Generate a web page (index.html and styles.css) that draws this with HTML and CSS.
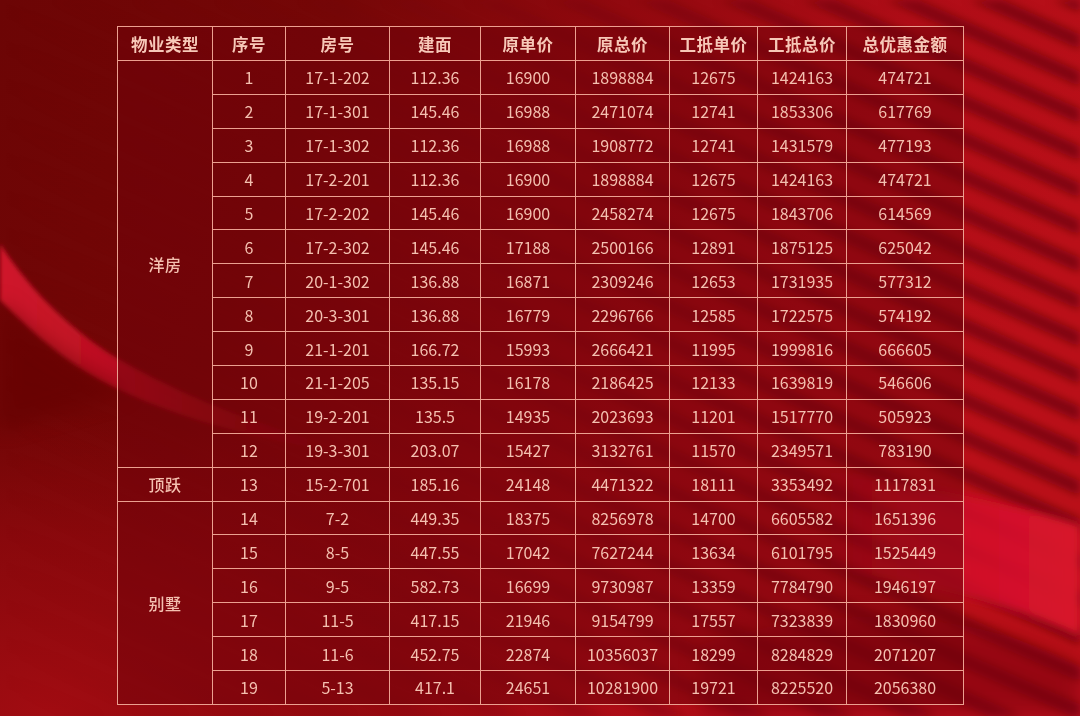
FILE: index.html
```html
<!DOCTYPE html>
<html lang="zh-CN">
<head>
<meta charset="utf-8">
<title>房源优惠表</title>
<link rel="stylesheet" href="styles.css">
</head>
<body>
<svg class="bg" width="1080" height="716" viewBox="0 0 1080 716" aria-hidden="true">
  <defs>
    <linearGradient id="base" x1="0" y1="0" x2="1" y2="0.25">
      <stop offset="0" stop-color="#6c0505"/>
      <stop offset="0.3" stop-color="#760707"/>
      <stop offset="0.55" stop-color="#92090f"/>
      <stop offset="0.8" stop-color="#b00d17"/>
      <stop offset="1" stop-color="#bb1019"/>
    </linearGradient>
    <radialGradient id="lowleft" cx="0.1" cy="1" r="0.9">
      <stop offset="0" stop-color="#a20c12"/>
      <stop offset="0.6" stop-color="#980a10" stop-opacity="0.6"/>
      <stop offset="1" stop-color="#960a10" stop-opacity="0"/>
    </radialGradient>
    <pattern id="stripes" width="34" height="34" patternUnits="userSpaceOnUse" patternTransform="rotate(24)">
      <rect x="0" y="0" width="34" height="14" fill="#6a0408"/>
    </pattern>
    <linearGradient id="fadeR" x1="0" y1="0" x2="1" y2="0">
      <stop offset="0" stop-color="#fff" stop-opacity="0"/>
      <stop offset="0.45" stop-color="#fff" stop-opacity="0.15"/>
      <stop offset="0.75" stop-color="#fff" stop-opacity="0.6"/>
      <stop offset="1" stop-color="#fff" stop-opacity="0.75"/>
    </linearGradient>
    <mask id="m">
      <rect width="1080" height="716" fill="url(#fadeR)"/>
    </mask>
    <linearGradient id="band" x1="0" y1="0" x2="1" y2="0">
      <stop offset="0" stop-color="#d2102a" stop-opacity="0"/>
      <stop offset="0.4" stop-color="#d2102a" stop-opacity="0.8"/>
      <stop offset="1" stop-color="#d8142c"/>
    </linearGradient>
    <linearGradient id="swoosh" x1="0" y1="0" x2="1" y2="0">
      <stop offset="0" stop-color="#d0162c"/>
      <stop offset="0.35" stop-color="#b80f20"/>
      <stop offset="1" stop-color="#a00c16" stop-opacity="0"/>
    </linearGradient>
    <filter id="blur" x="-30%" y="-30%" width="160%" height="160%">
      <feGaussianBlur stdDeviation="4"/>
    </filter>
    <filter id="soft" x="-30%" y="-30%" width="160%" height="160%">
      <feGaussianBlur stdDeviation="2"/>
    </filter>
    <filter id="blur2" x="-30%" y="-30%" width="160%" height="160%">
      <feGaussianBlur stdDeviation="10"/>
    </filter>
  </defs>
  <rect width="1080" height="716" fill="url(#base)"/>
  <rect x="0" y="380" width="520" height="336" fill="url(#lowleft)"/>
  <g mask="url(#m)" filter="url(#blur)">
    <rect width="1080" height="716" fill="url(#stripes)"/>
  </g>
  <path d="M0 244 C30 290 70 330 120 360 C190 400 270 430 360 452 L360 456 C260 440 180 420 110 385 C60 360 25 325 0 300 Z" fill="url(#swoosh)" filter="url(#soft)"/>
  <path d="M0 300 C40 340 80 370 130 392 L0 430 Z" fill="#640406" opacity="0.55" filter="url(#blur2)"/>
  <path d="M820 470 C900 482 990 498 1080 525 L1080 636 C1000 600 920 584 830 568 Z" fill="url(#band)" filter="url(#blur)"/>
  <path d="M700 645 C820 605 960 605 1080 665 L1080 716 L700 716 Z" fill="#7a050a" opacity="0.55" filter="url(#blur2)"/>
</svg>

<main class="page">
  <table class="price-table">
    <colgroup>
      <col class="c-type"><col class="c-no"><col class="c-room"><col class="c-area"><col class="c-up">
      <col class="c-tp"><col class="c-wup"><col class="c-wtp"><col class="c-disc">
    </colgroup>
    <thead>
      <tr>
        <th>物业类型</th><th>序号</th><th>房号</th><th>建面</th><th>原单价</th><th>原总价</th><th>工抵单价</th><th>工抵总价</th><th>总优惠金额</th>
      </tr>
    </thead>
    <tbody>
      <tr><td class="type" rowspan="12">洋房</td><td>1</td><td>17-1-202</td><td>112.36</td><td>16900</td><td>1898884</td><td>12675</td><td>1424163</td><td>474721</td></tr>
      <tr><td>2</td><td>17-1-301</td><td>145.46</td><td>16988</td><td>2471074</td><td>12741</td><td>1853306</td><td>617769</td></tr>
      <tr><td>3</td><td>17-1-302</td><td>112.36</td><td>16988</td><td>1908772</td><td>12741</td><td>1431579</td><td>477193</td></tr>
      <tr><td>4</td><td>17-2-201</td><td>112.36</td><td>16900</td><td>1898884</td><td>12675</td><td>1424163</td><td>474721</td></tr>
      <tr><td>5</td><td>17-2-202</td><td>145.46</td><td>16900</td><td>2458274</td><td>12675</td><td>1843706</td><td>614569</td></tr>
      <tr><td>6</td><td>17-2-302</td><td>145.46</td><td>17188</td><td>2500166</td><td>12891</td><td>1875125</td><td>625042</td></tr>
      <tr><td>7</td><td>20-1-302</td><td>136.88</td><td>16871</td><td>2309246</td><td>12653</td><td>1731935</td><td>577312</td></tr>
      <tr><td>8</td><td>20-3-301</td><td>136.88</td><td>16779</td><td>2296766</td><td>12585</td><td>1722575</td><td>574192</td></tr>
      <tr><td>9</td><td>21-1-201</td><td>166.72</td><td>15993</td><td>2666421</td><td>11995</td><td>1999816</td><td>666605</td></tr>
      <tr><td>10</td><td>21-1-205</td><td>135.15</td><td>16178</td><td>2186425</td><td>12133</td><td>1639819</td><td>546606</td></tr>
      <tr><td>11</td><td>19-2-201</td><td>135.5</td><td>14935</td><td>2023693</td><td>11201</td><td>1517770</td><td>505923</td></tr>
      <tr><td>12</td><td>19-3-301</td><td>203.07</td><td>15427</td><td>3132761</td><td>11570</td><td>2349571</td><td>783190</td></tr>
      <tr><td class="type">顶跃</td><td>13</td><td>15-2-701</td><td>185.16</td><td>24148</td><td>4471322</td><td>18111</td><td>3353492</td><td>1117831</td></tr>
      <tr><td class="type" rowspan="6">别墅</td><td>14</td><td>7-2</td><td>449.35</td><td>18375</td><td>8256978</td><td>14700</td><td>6605582</td><td>1651396</td></tr>
      <tr><td>15</td><td>8-5</td><td>447.55</td><td>17042</td><td>7627244</td><td>13634</td><td>6101795</td><td>1525449</td></tr>
      <tr><td>16</td><td>9-5</td><td>582.73</td><td>16699</td><td>9730987</td><td>13359</td><td>7784790</td><td>1946197</td></tr>
      <tr><td>17</td><td>11-5</td><td>417.15</td><td>21946</td><td>9154799</td><td>17557</td><td>7323839</td><td>1830960</td></tr>
      <tr><td>18</td><td>11-6</td><td>452.75</td><td>22874</td><td>10356037</td><td>18299</td><td>8284829</td><td>2071207</td></tr>
      <tr><td>19</td><td>5-13</td><td>417.1</td><td>24651</td><td>10281900</td><td>19721</td><td>8225520</td><td>2056380</td></tr>
    </tbody>
  </table>
</main>
</body>
</html>
```

FILE: styles.css
```css
html, body {
  margin: 0;
  padding: 0;
  width: 1080px;
  height: 716px;
  overflow: hidden;
  background: #8a0a0e;
}

.bg {
  position: fixed;
  left: 0;
  top: 0;
  z-index: 0;
  display: block;
}

.page {
  position: relative;
  z-index: 1;
  padding: 26px 0 0 117px;
}

.price-table {
  border-collapse: collapse;
  table-layout: fixed;
  width: 846px;
  font-family: "Noto Sans CJK SC", "Noto Sans", sans-serif;
  color: #f4c0b0;
  background: rgba(112, 2, 10, 0.5);
  border: 1.5px solid #efa394;
}

.c-type { width: 95px; }
.c-no { width: 73px; }
.c-room { width: 104px; }
.c-area { width: 91px; }
.c-up { width: 95px; }
.c-tp { width: 94px; }
.c-wup { width: 88px; }
.c-wtp { width: 89px; }
.c-disc { width: 117px; }

.price-table th,
.price-table td {
  border: 1.3px solid #eca090;
  text-align: center;
  vertical-align: middle;
  padding: 0;
  white-space: nowrap;
}

.price-table th {
  height: 33px;
  font-size: 16.5px;
  font-weight: 700;
  letter-spacing: 0.5px;
  color: #f7c8b8;
}

.price-table td {
  height: 32.9px;
  font-size: 16px;
  font-weight: 400;
  line-height: 20px;
}

.price-table td.type {
  font-weight: 500;
  font-size: 16px;
  letter-spacing: 0.5px;
}
```
